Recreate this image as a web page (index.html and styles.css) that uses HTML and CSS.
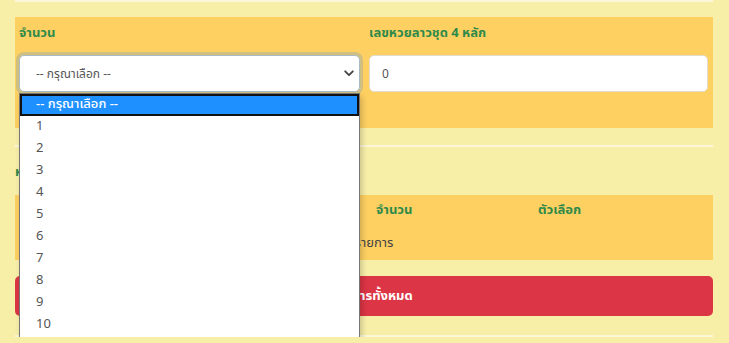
FILE: index.html
```html
<!DOCTYPE html>
<html lang="th">
<head>
    <meta charset="UTF-8">
    <meta name="viewport" content="width=device-width, initial-scale=1.0">
    <title>หวยลาวชุด</title>
    <link rel="stylesheet" href="styles.css">
</head>
<body>
    <div class="wrap">
        <hr class="line line-top">

        <div class="form-box">
            <div class="field">
                <label class="field-label">จำนวน</label>
                <div class="select-wrap">
                    <select class="form-select">
                        <option>-- กรุณาเลือก --</option>
                    </select>
                    <svg class="chevron" width="10" height="7" viewBox="0 0 10 7">
                        <path d="M1.2 1.3 L5 5.2 L8.8 1.3" fill="none" stroke="#444" stroke-width="1.8" stroke-linecap="round" stroke-linejoin="round"/>
                    </svg>
                </div>
            </div>
            <div class="field">
                <label class="field-label">เลขหวยลาวชุด 4 หลัก</label>
                <input class="form-input" type="text" value="0">
            </div>
        </div>

        <hr class="line line-mid">

        <h6 class="list-title">หวยที่เลือก</h6>

        <table class="list-table">
            <thead>
                <tr>
                    <th class="col-no">ลำดับ</th>
                    <th class="col-num">เลข</th>
                    <th class="col-qty">จำนวน</th>
                    <th class="col-opt">ตัวเลือก</th>
                </tr>
            </thead>
            <tbody>
                <tr>
                    <td colspan="4" class="empty">ไม่มีรายการ</td>
                </tr>
            </tbody>
        </table>

        <button class="btn-clear">ลบรายการทั้งหมด</button>

        <hr class="line line-bottom">

        <!-- opened list of the select -->
        <ul class="dropdown">
            <li class="active">-- กรุณาเลือก --</li>
            <li>1</li>
            <li>2</li>
            <li>3</li>
            <li>4</li>
            <li>5</li>
            <li>6</li>
            <li>7</li>
            <li>8</li>
            <li>9</li>
            <li>10</li>
        </ul>
    </div>
</body>
</html>
```

FILE: styles.css
```css
body {
    margin: 0;
    background-color: #f7efa8;
    font-family: "Noto Sans Thai", "Noto Sans", "DejaVu Sans", sans-serif;
    font-size: 13px;
    color: #555;
}

.wrap {
    position: relative;
    padding: 0 16px 0 15px;
}

.line {
    border: 0;
    height: 2px;
    margin: 0;
    background: #fbf7d8;
}

.form-box {
    margin-top: 15px;
    height: 111px;
    box-sizing: border-box;
    background: #fed062;
    padding: 8px 5px 0 4px;
    display: grid;
    grid-template-columns: 341px 1fr;
    column-gap: 9px;
}

.field-label {
    display: block;
    color: #2f8a4a;
    font-weight: bold;
    font-size: 13px;
    height: 30px;
    line-height: 16px;
}

.select-wrap {
    position: relative;
}

.form-select,
.form-input {
    display: block;
    width: 100%;
    height: 37px;
    box-sizing: border-box;
    border: 1px solid #e3dccb;
    border-radius: 5px;
    background: #fff;
    font-family: inherit;
    font-size: 12px;
    color: #555;
    padding: 0 12px;
    margin: 0;
}

.form-select {
    appearance: none;
    -webkit-appearance: none;
    padding-left: 16px;
    border-color: #a9bcc6;
    box-shadow: 0 0 0 3px rgba(140, 165, 175, .4);
    outline: none;
}

.chevron {
    position: absolute;
    right: 6px;
    top: 15px;
}

.line-mid {
    margin-top: 17px;
}

.list-title {
    margin: 17px 0 0;
    height: 31px;
    font-size: 13px;
    font-weight: bold;
    color: #2f8a4a;
    line-height: 16px;
}

.list-table {
    width: 100%;
    border-collapse: collapse;
    background: #fed062;
}

.list-table th {
    text-align: left;
    color: #2f8a4a;
    font-weight: bold;
    font-size: 13px;
    height: 30px;
    padding: 0 8px;
}

.list-table td {
    height: 35px;
    padding: 0 8px;
}

.col-no { width: 100px; }
.col-num { width: 221px; }
.col-qty { width: 146px; }

.empty {
    text-align: center;
    color: #444;
}

.btn-clear {
    display: block;
    width: 100%;
    height: 40px;
    margin-top: 16px;
    border: 0;
    border-radius: 5px;
    background: #dc3545;
    color: #fff;
    font-family: inherit;
    font-weight: bold;
    font-size: 13px;
}

.line-bottom {
    margin-top: 19px;
}

.dropdown {
    position: absolute;
    top: 93px;
    left: 19px;
    width: 341px;
    box-sizing: border-box;
    margin: 0;
    padding: 0 0 3px;
    list-style: none;
    background: #fff;
    border: 1px solid #767676;
    box-shadow: 2px 3px 6px rgba(0, 0, 0, .2);
}

.dropdown li {
    height: 22px;
    line-height: 21px;
    padding-left: 16px;
    font-size: 13px;
    color: #555;
}

.dropdown li.active {
    background: #1e90ff;
    color: #fff;
    font-weight: 500;
    outline: 2px solid #111;
    outline-offset: -2px;
}
```
